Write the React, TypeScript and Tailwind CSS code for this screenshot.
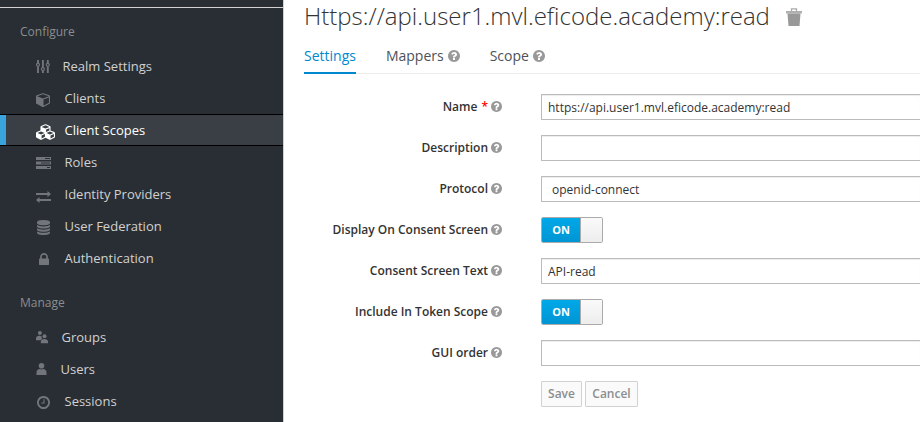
import React from "react";

type GlyphProps = { className?: string };

function QuestionCircle({ className = "" }: GlyphProps) {
  return (
    <svg viewBox="128 128 1536 1536" fill="currentColor" className={`shrink-0 text-[#999] ${className}`}>
      <path d="M1024 1376v-192q0-14-9-23t-23-9h-192q-14 0-23 9t-9 23v192q0 14 9 23t23 9h192q14 0 23-9t9-23zm256-672q0-88-55.5-163t-138.5-116-170-41q-243 0-371 213-15 24 8 42l132 100q7 6 19 6 16 0 25-12 53-68 86-92 34-24 86-24 48 0 85.5 26t37.5 59q0 38-20 61t-68 45q-63 28-115.5 86.5t-52.5 125.5v36q0 14 9 23t23 9h192q14 0 23-9t9-23q0-19 21.5-49.5t54.5-49.5q32-18 49-28.5t46-35 44.5-48 28-60.5 12.5-81zm384 192q0 209-103 385.5t-279.5 279.5-385.5 103-385.5-103-279.5-279.5-103-385.5 103-385.5 279.5-279.5 385.5-103 385.5 103 279.5 279.5 103 385.5z" />
    </svg>
  );
}

const Sliders = () => (
  <svg width="14" height="14" viewBox="0 0 14 14" className="mt-px">
    <g fill="none" stroke="currentColor" strokeWidth="1.9">
      <path d="M2 0v3.200M2 6.400v6.600M6.900 0v7.400M6.900 10.800v2.200M11.800 0v3.200M11.800 6.400v6.600" />
      <circle cx="2" cy="4.800" r="1.500" strokeWidth="1.200" />
      <circle cx="6.900" cy="9.100" r="1.500" strokeWidth="1.200" />
      <circle cx="11.800" cy="4.800" r="1.500" strokeWidth="1.200" />
    </g>
  </svg>
);

const Cube = () => (
  <svg width="14" height="14" viewBox="0 110 1664 1664" fill="currentColor" className="mt-1">
    <path d="M896 1629l640-349v-636l-640 233v752zm-64-865l698-254-698-254-698 254zm832-252v768q0 35-18 65t-49 47l-704 384q-28 16-61 16t-61-16l-704-384q-31-17-49-47t-18-65v-768q0-40 23-73t61-47l704-256q22-8 44-8t44 8l704 256q38 14 61 47t23 73z" />
  </svg>
);

const Cubes = () => (
  <svg width="19" height="16" viewBox="0 0 2176 1792" fill="currentColor" className="mt-1">
    <path d="M640 1632l384-192v-314l-384 164v342zm-64-454l404-173-404-173-404 173zm1088 454l384-192v-314l-384 164v342zm-64-454l404-173-404-173-404 173zm-448-293l384-165v-266l-384 164v267zm-64-379l441-189-441-189-441 189zm1088 518v416q0 36-19 67t-52 47l-448 224q-25 14-57 14t-57-14l-448-224q-5-2-7-4-2 2-7 4l-448 224q-25 14-57 14t-57-14l-448-224q-33-16-52-47t-19-67v-416q0-38 21.5-70t56.5-48l434-186v-400q0-38 21.5-70t56.5-48l448-192q23-10 50-10t50 10l448 192q35 16 56.5 48t21.5 70v400l434 186q36 16 57 48t21 70z" />
  </svg>
);

const Tasks = () => (
  <svg width="15" height="12" viewBox="0 0 15 12" className="mt-0.5">
    <path fill="currentColor" d="M0 0h15v3H0zM0 4.5h15v3H0zM0 9h15v3H0z" />
    <path fill="#292e34" d="M9 1h5v1H9zM5 5.5h9v1H5zM11 10h3v1h-3z" />
  </svg>
);

const Exchange = () => (
  <svg width="15" height="12" viewBox="0 0 15 12" fill="currentColor" className="mt-1.5">
    <path d="M0 2h11.500V0L15 3l-3.500 3V4H0zM15 8H3.500V6L0 9l3.500 3v-2H15z" />
  </svg>
);

const Database = () => (
  <svg width="13" height="15" viewBox="128 0 1536 1792" preserveAspectRatio="none" fill="currentColor" className="ml-px mt-[3px]">
    <path d="M896 768q237 0 443-43t325-127v170q0 69-103 128t-280 93.5-385 34.5-385-34.5-280-93.5-103-128v-170q119 84 325 127t443 43zm0 768q237 0 443-43t325-127v170q0 69-103 128t-280 93.5-385 34.5-385-34.5-280-93.5-103-128v-170q119 84 325 127t443 43zm0-384q237 0 443-43t325-127v170q0 69-103 128t-280 93.5-385 34.5-385-34.5-280-93.5-103-128v-170q119 84 325 127t443 43zm0-1152q208 0 385 34.5t280 93.5 103 128v128q0 69-103 128t-280 93.5-385 34.5-385-34.5-280-93.5-103-128v-128q0-69 103-128t280-93.5 385-34.500z" />
  </svg>
);

const Lock = () => (
  <svg width="10" height="12" viewBox="320 128 1152 1408" preserveAspectRatio="none" fill="currentColor" className="ml-[3px] mt-0.5">
    <path d="M640 768h512v-192q0-106-75-181t-181-75-181 75-75 181v192zm832 96v576q0 40-28 68t-68 28h-960q-40 0-68-28t-28-68v-576q0-40 28-68t68-28h32v-192q0-184 132-316t316-132 316 132 132 316v192h32q40 0 68 28t28 68z" />
  </svg>
);

const Group = () => (
  <svg width="12" height="13" viewBox="0 0 12 13" fill="currentColor" className="mt-px">
    <circle cx="3.900" cy="2" r="2" />
    <path d="M0 9.200V7.500C0 5.600 1.400 4.700 3.200 4.700c1 0 1.900.2 2.500.8-.3 1.200.1 2 .9 2.600-1 .3-1.700.6-2.200 1.100z" />
    <circle cx="8.500" cy="5.200" r="2" />
    <path d="M4.800 12.200v-1.500c0-1.800 1.400-2.700 3.600-2.700s3.600.9 3.600 2.700v1.500z" />
  </svg>
);

const User = () => (
  <svg width="11" height="12" viewBox="0 0 11 12" fill="currentColor">
    <circle cx="5.500" cy="2.800" r="2.800" />
    <path d="M.5 12V9.500C.5 7.300 2 6.200 3.800 6.100c1 .6 2.400.6 3.400 0 1.800.1 3.300 1.200 3.300 3.400V12z" />
  </svg>
);

const Clock = () => (
  <svg width="13" height="13" viewBox="128 128 1536 1536" fill="currentColor" className="ml-px mt-[3px]">
    <path d="M1024 544v448q0 14-9 23t-23 9h-320q-14 0-23-9t-9-23v-64q0-14 9-23t23-9h224v-352q0-14 9-23t23-9h64q14 0 23 9t9 23zm416 352q0-148-73-273t-198-198-273-73-273 73-198 198-73 273 73 273 198 198 273 73 273-73 198-198 73-273zm224 0q0 209-103 385.5t-279.5 279.5-385.500 103-385.500-103-279.500-279.500-103-385.500 103-385.500 279.500-279.500 385.500-103 385.500 103 279.500 279.500 103 385.500z" />
  </svg>
);

type NavItemProps = { icon: React.ReactNode; label: string; active?: boolean; slot?: string };

function NavItem({ icon, label, active, slot = "w-[28.500px]" }: NavItemProps) {
  if (active) {
    return (
      <a className="flex h-8 items-center border-y border-black bg-[#393f44] text-white">
        <span className="h-full w-1.5 bg-[#39a5dc]" />
        <span className="ml-[30px] w-[28.500px]">{icon}</span>
        <span className="pt-0.5">{label}</span>
      </a>
    );
  }
  return (
    <a className="flex h-8 items-center pl-9 text-[#d1d1d1]">
      <span className={`shrink-0 text-[#72767b] ${slot}`}>{icon}</span>
      <span className="pt-0.5">{label}</span>
    </a>
  );
}

function Row({ label, required, children }: { label: string; required?: boolean; children: React.ReactNode }) {
  return (
    <div className="flex h-[26px]">
      <div className="flex w-[199px] shrink-0 items-center justify-end pb-px font-semibold">
        {label}
        {required && <span className="ml-1 text-[#f00]">*</span>}
        <QuestionCircle className="ml-[3px] size-[11px]" />
      </div>
      <div className="ml-[39px] flex flex-1">{children}</div>
    </div>
  );
}

function Field({ value = "", inset = "pl-1.5" }: { value?: string; inset?: string }) {
  return (
    <input
      readOnly
      value={value}
      className={`h-[26px] w-full rounded-l-[1px] border border-r-0 border-[#bbb] bg-white text-xs text-[#333] shadow-[inset_0_1px_1px_rgba(0,0,0,0.075)] outline-none ${inset}`}
    />
  );
}

function Toggle() {
  return (
    <div className="flex h-[26px] w-[62px] overflow-hidden rounded-[2px] border border-[#aaa]">
      <span className="flex w-[38px] items-center justify-center bg-linear-to-b from-[#00a8e8] to-[#0095d4] text-[11px] font-bold text-white">ON</span>
      <span className="flex-1 border-l border-[#aaa] bg-linear-to-b from-[#fafafa] to-[#ededed]" />
    </div>
  );
}

export default function App() {
  return (
    <div className="flex h-[422px] w-[920px] overflow-hidden bg-white font-['Open_Sans',sans-serif] text-xs text-[#333] [&_svg]:block">
      <aside className="w-[284px] shrink-0 border-r border-[#d1d1d1] bg-[#292e34] text-[13px]">
        <div className="h-2 border-b border-[#d1d1d1]" />
        <h2 className="mb-[9px] mt-[15px] pl-5 text-xs leading-[18px] text-[#8b8d8f]">Configure</h2>
        <nav>
          <NavItem icon={<Sliders />} label="Realm Settings" slot="w-[26.500px]" />
          <NavItem icon={<Cube />} label="Clients" />
          <NavItem icon={<Cubes />} label="Client Scopes" active />
          <NavItem icon={<Tasks />} label="Roles" />
          <NavItem icon={<Exchange />} label="Identity Providers" />
          <NavItem icon={<Database />} label="User Federation" />
          <NavItem icon={<Lock />} label="Authentication" />
        </nav>
        <h2 className="mb-[9px] mt-5 pl-5 text-xs leading-[18px] text-[#8b8d8f]">Manage</h2>
        <nav>
          <NavItem icon={<Group />} label="Groups" slot="w-[25.500px]" />
          <NavItem icon={<User />} label="Users" slot="w-[24.500px]" />
          <NavItem icon={<Clock />} label="Sessions" />
        </nav>
      </aside>
      <main className="min-w-0 flex-1 pl-5">
        <h1 className="flex h-[34px] items-center pb-0.5 text-2xl font-light text-[#333]">
          Https://api.user1.mvl.eficode.academy:read
          <svg width="16" height="18" viewBox="0 0 16 18" className="ml-4 mt-0.5 text-[#999]">
            <path fill="none" stroke="#aaa" strokeWidth="1.300" d="M5.500 3V.8h5V3" />
            <path fill="#b0b0b0" d="M0 3h16v2.500H0z" />
            <path fill="currentColor" d="M1.500 5.500h13l-1 12.500h-11z" />
          </svg>
        </h1>
        <div className="flex h-10 items-stretch border-b border-[#ededed] text-sm text-[#4d5258]">
          <span className="mr-[30px] flex h-10 items-center border-b-2 border-[#0088ce] pt-1.5 text-[#0088ce]">Settings</span>
          <span className="mr-[30px] flex items-center pt-[5px]">
            Mappers <QuestionCircle className="ml-1 size-3" />
          </span>
          <span className="flex items-center pt-[5px]">
            Scope <QuestionCircle className="ml-1 size-3" />
          </span>
        </div>
        <div className="-ml-px mt-5 flex flex-col gap-[15px]">
          <Row label="Name" required>
            <Field value="https://api.user1.mvl.eficode.academy:read" />
          </Row>
          <Row label="Description">
            <Field />
          </Row>
          <Row label="Protocol">
            <Field value="openid-connect" inset="pl-2.5" />
          </Row>
          <Row label="Display On Consent Screen">
            <Toggle />
          </Row>
          <Row label="Consent Screen Text">
            <Field value="API-read" />
          </Row>
          <Row label="Include In Token Scope">
            <Toggle />
          </Row>
          <Row label="GUI order">
            <Field />
          </Row>
          <div className="ml-[238px] flex h-[26px] gap-[3px] font-semibold text-[#8b8d8f]">
            <button className="w-[41px] rounded-[1px] border border-[#d1d1d1] bg-[#fafafa]">Save</button>
            <button className="w-[53px] rounded-[1px] border border-[#d1d1d1] bg-[#fafafa]">Cancel</button>
          </div>
        </div>
      </main>
    </div>
  );
}
